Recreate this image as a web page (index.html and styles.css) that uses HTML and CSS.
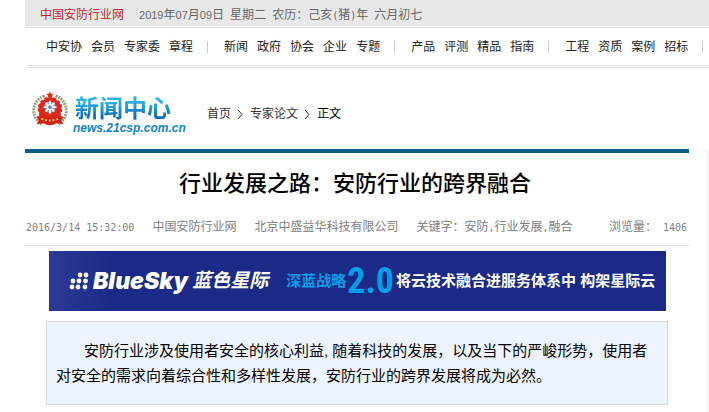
FILE: index.html
```
<!DOCTYPE html>
<html lang="zh-CN">
<head>
  <meta charset="UTF-8">
  <meta name="viewport" content="width=device-width, initial-scale=1">
  <title>行业发展之路：安防行业的跨界融合</title>
  <link rel="stylesheet" href="styles.css">
</head>
<body>
  <header>
    <div class="topbar">
      <a href="#" class="site">中国安防行业网</a>
      <p class="date"><span class="digit">2019</span>年<span class="digit">07</span>月<span class="digit">09</span>日<span class="num"> </span>星期二<span class="num"> </span>农历：己亥<span class="num">(</span>猪<span class="num">)</span>年<span class="num"> </span>六月初七</p>
    </div>
    <nav class="menu">
      <div class="group">
        <a href="#">中安协</a>
        <a href="#">会员</a>
        <a href="#">专家委</a>
        <a href="#">章程</a>
      </div>
      <div class="group">
        <a href="#">新闻</a>
        <a href="#">政府</a>
        <a href="#">协会</a>
        <a href="#">企业</a>
        <a href="#">专题</a>
      </div>
      <div class="group">
        <a href="#">产品</a>
        <a href="#">评测</a>
        <a href="#">精品</a>
        <a href="#">指南</a>
      </div>
      <div class="group">
        <a href="#">工程</a>
        <a href="#">资质</a>
        <a href="#">案例</a>
        <a href="#">招标</a>
      </div>
    </nav>
    <div class="rule"></div>
  </header>

  <div class="channel">
    <a href="#" class="logo">
      <svg class="emblem" viewBox="0 0 38 40" aria-hidden="true">
        <g fill="none" stroke="#8f9c78" stroke-width="3" stroke-dasharray="2 1">
          <path d="M13 5C4 9 1 16 2 23c1 5 4 9 8 12"/>
          <path d="M25 5c9 4 12 11 11 18-1 5-4 9-8 12"/>
        </g>
        <path d="M19 0l1 3h3l-2 2 1 3-3-2-3 2 1-3-2-2h3z" fill="#e02a20"/>
        <circle cx="19" cy="19" r="12" fill="#dc2a1e"/>
        <circle cx="19" cy="19" r="12" fill="none" stroke="#dc2a1e" stroke-width="2" stroke-dasharray="3 2"/>
        <path d="M5 27l5-2q9 4 18 0l5 2-2 4 2 4-7-1q-7 4-14 0l-7 1 2-4z" fill="#d6241b"/>
        <path d="M10 29q9 4 18 0" fill="none" stroke="#f3c65a" stroke-width="2" stroke-dasharray="2 2"/>
        <circle cx="19" cy="17" r="6" fill="#7fa6dc"/>
        <g stroke="#fff" stroke-width="2" stroke-linecap="round">
          <path d="M19 11v12M13 17h12M15 13l8 8M23 13l-8 8"/>
        </g>
        <circle cx="19" cy="17" r="2" fill="#5f8bd0"/>
      </svg>
      <span class="logo-text">
        <strong>新闻中心</strong>
        <em>news.21csp.com.cn</em>
      </span>
    </a>
    <div class="crumbs">
      <a href="#">首页</a>
      <svg viewBox="0 0 5 9"><path d="M0 0l4 4.5L0 9"/></svg>
      <a href="#">专家论文</a>
      <svg viewBox="0 0 5 9"><path d="M0 0l4 4.5L0 9"/></svg>
      <span class="current">正文</span>
    </div>
  </div>

  <div class="page">
    <main>
      <h1>行业发展之路：安防行业的跨界融合</h1>
      <div class="meta">
        <span class="num">2016/3/14 15:32:00</span>
        <span>中国安防行业网</span>
        <span>北京中盛益华科技有限公司</span>
        <span>关键字：安防<span class="num">,</span>行业发展<span class="num">,</span>融合</span>
        <span class="views">浏览量：<span class="num"> 1406</span></span>
      </div>

      <a href="#" class="banner">
        <svg class="dots" viewBox="0 0 20 18" aria-hidden="true">
          <g fill="#fff">
            <circle cx="11" cy="3" r="2.4"/><circle cx="17" cy="3" r="2.4"/>
            <circle cx="4" cy="9" r="2.4"/><circle cx="10" cy="9" r="2.4"/><circle cx="16.500" cy="9" r="2.4"/>
            <circle cx="3" cy="15" r="2.4"/><circle cx="9" cy="15" r="2.4"/><circle cx="16" cy="15" r="2.4"/>
          </g>
        </svg>
        <span class="brand">BlueSky</span>
        <span class="brand-cn">蓝色星际</span>
        <span class="plan">深蓝战略</span>
        <span class="version">2.0</span>
        <span class="slogan">将云技术融合进服务体系中 构架星际云</span>
      </a>

      <p class="summary">安防行业涉及使用者安全的核心利益<span class="comma">,</span>随着科技的发展，以及当下的严峻形势，使用者对安全的需求向着综合性和多样性发展，安防行业的跨界发展将成为必然。</p>
    </main>
    <aside></aside>
  </div>
</body>
</html>
```
FILE: styles.css
```
*, *::before, *::after {box-sizing: border-box; margin: 0}
body {
  min-height: 100vh;
  display: flex;
  flex-direction: column;
  overflow-x: hidden;
  background: white;
  color: #333;
  font: 12px/18px "Liberation Sans", "Noto Sans CJK SC", sans-serif;
}
a {
  text-decoration: none;
  color: inherit;
}
.num {
  font-family: "DejaVu Sans Mono", monospace;
  font-size: 10px;
  line-height: 1;
  white-space: pre;
}
.digit {font-size: 11px}

/* header */
header {
  padding-left: 25px;
  white-space: nowrap;
}
.topbar {
  height: 28px;
  padding: 6px 15px 0;
  display: flex;
  gap: 15px;
  background: #e8e8e8;
  border-bottom: 1px solid #ddd;
  box-shadow: inset 0 -1px white;
  color: #666;
}
.site {color: #c01f2f}
.menu {
  padding: 10px 0 9px 21px;
  display: flex;
  color: #222;
}
.group {
  display: flex;
  align-items: center;
  gap: 9px;
}
.group::after {
  content: "";
  width: 1px;
  height: 12px;
  margin: 0 16px 0 5px;
  background: #ccc;
}
.rule {
  height: 3px;
  margin-left: 3px;
  border: 1px solid #ddd;
  border-right: 0;
}

/* channel logo and breadcrumbs */
.channel {
  height: 81px;
  padding: 11px 0 0 31px;
  display: flex;
  align-items: center;
  gap: 21px;
}
.logo {
  display: flex;
  align-items: flex-start;
  gap: 4px;
}
.emblem {
  width: 38px;
  height: 38px;
}
.logo-text {
  width: 113px;
  padding: 4px 0 3px;
  display: flex;
  flex-direction: column;
}
.logo-text strong {
  padding-left: 2px;
  font-size: 24px;
  line-height: 27px;
  background: linear-gradient(#2fb2e8 25%, #0a6fb8 80%);
  -webkit-background-clip: text;
  background-clip: text;
  color: transparent;
}
.logo-text em {
  font-size: 12px;
  line-height: 13px;
  font-weight: bold;
  color: #1283c6;
}
.crumbs {
  display: flex;
  align-items: center;
  gap: 7px;
}
.crumbs svg {
  width: 5px;
  height: 9px;
  overflow: visible;
  fill: none;
  stroke: #222;
}
.current {color: black}

/* article */
.page {
  flex: 1;
  padding-left: 25px;
  display: grid;
  grid-template-columns: minmax(0, 1fr) 2px;
  gap: 18px;
}
aside {background: #f6f6f6}
main {border-top: 4px solid #045d87}
h1 {
  padding: 15px 4px 0 0;
  text-align: center;
  font-size: 22px;
  line-height: 32px;
  font-weight: 500;
  color: black;
}
.meta {
  padding: 18px 2px 9px 1px;
  display: flex;
  align-items: baseline;
  gap: 18px;
  border-bottom: 1px solid #e0e0e0;
  white-space: nowrap;
  color: #808080;
}
.views {margin-left: auto}

.banner {
  height: 60px;
  margin: 5px 23px 0 24px;
  padding-left: 20px;
  display: flex;
  align-items: center;
  background: linear-gradient(90deg, #2c3a94, #1a2a86 10%);
  white-space: nowrap;
  font-weight: bold;
  color: white;
}
.dots {
  width: 20px;
  height: 18px;
  margin-right: 4px;
}
.brand {
  font: italic 900 23px/30px Inter, sans-serif;
}
.brand-cn {
  margin-left: 4px;
  font-size: 19px;
  font-style: italic;
}
.plan {
  margin-left: 18px;
  font-size: 15px;
  color: #00a0e9;
}
.version {
  margin: 0 2px 0 1px;
  font: bold 36px/60px "Liberation Sans Narrow", "Roboto Condensed", sans-serif;
  color: #00a0e9;
}
.slogan {font-size: 15px}

.summary {
  margin: 10px 21px 0;
  padding: 16px 9px;
  background: #edf4ff;
  border: 1px solid #d6d8dc;
  text-indent: 28px;
  font-size: 15px;
  line-height: 25px;
  color: black;
}
.comma {padding-right: 4px}
```
